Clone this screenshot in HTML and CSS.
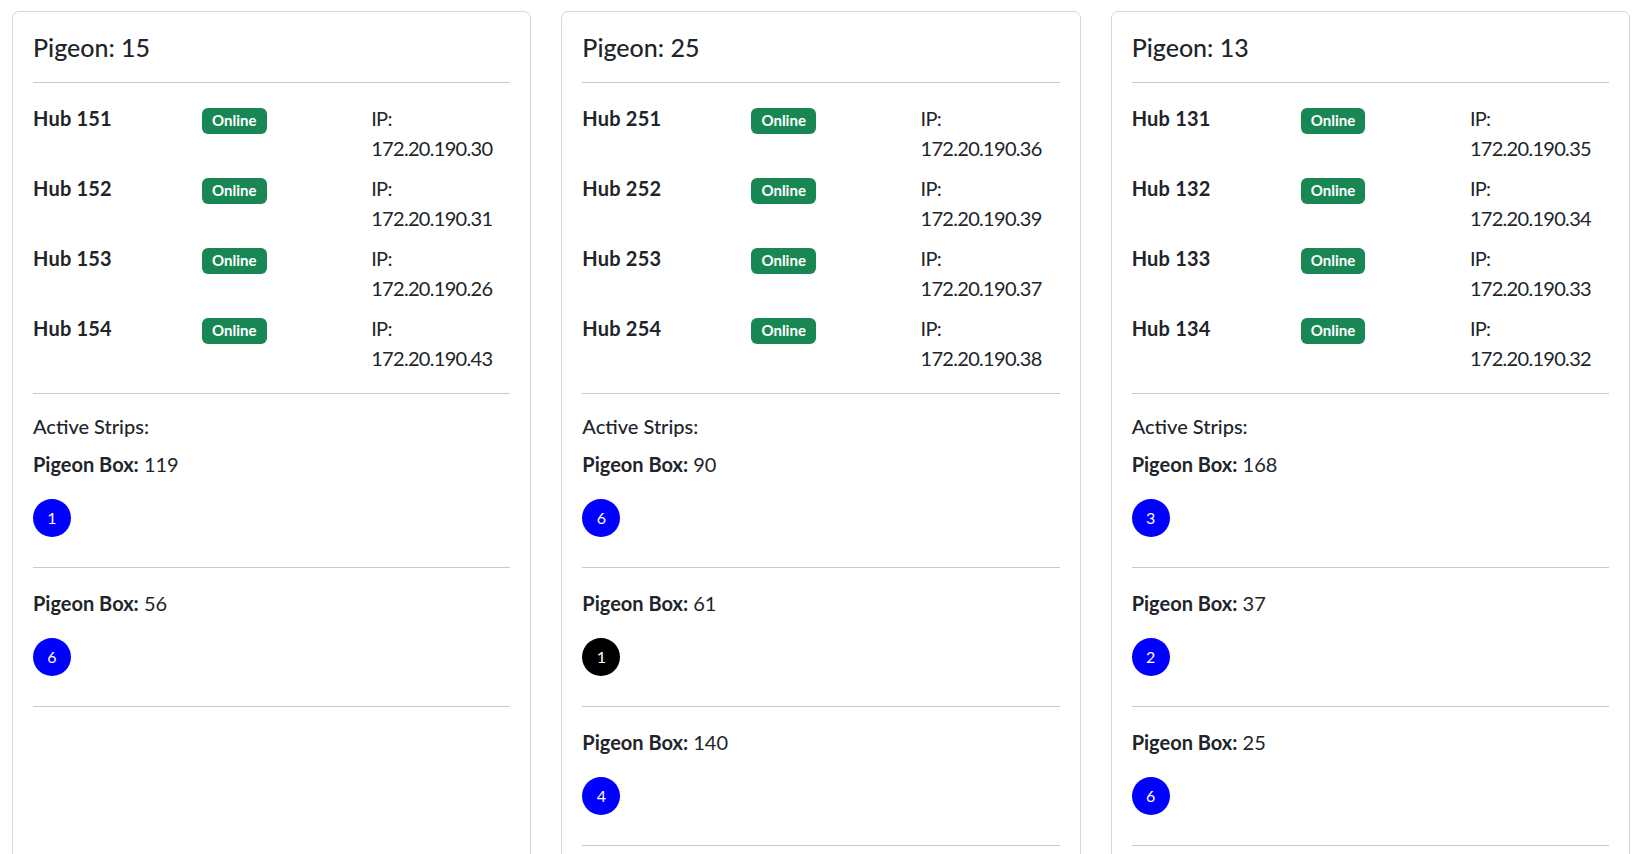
FILE: index.html
```html
<!DOCTYPE html>
<html lang="en">
<head>
<meta charset="utf-8">
<title>Pigeons</title>
<link rel="stylesheet" href="styles.css">
</head>
<body>
<div class="page">

  <div class="card">
    <div class="card-body">
      <h5 class="card-title">Pigeon: 15</h5>
      <hr>
      <div class="hub-row"><div class="hub-name">Hub 151</div><div><span class="badge">Online</span></div><div class="hub-ip">IP: 172.20.190.30</div></div>
      <div class="hub-row"><div class="hub-name">Hub 152</div><div><span class="badge">Online</span></div><div class="hub-ip">IP: 172.20.190.31</div></div>
      <div class="hub-row"><div class="hub-name">Hub 153</div><div><span class="badge">Online</span></div><div class="hub-ip">IP: 172.20.190.26</div></div>
      <div class="hub-row"><div class="hub-name">Hub 154</div><div><span class="badge">Online</span></div><div class="hub-ip">IP: 172.20.190.43</div></div>
      <hr>
      <h6 class="strips-title">Active Strips:</h6>
      <p class="box-label"><strong>Pigeon Box:</strong> 119</p>
      <div class="dots"><span class="dot dot-blue">1</span></div>
      <hr>
      <p class="box-label"><strong>Pigeon Box:</strong> 56</p>
      <div class="dots"><span class="dot dot-blue">6</span></div>
      <hr>
    </div>
  </div>

  <div class="card">
    <div class="card-body">
      <h5 class="card-title">Pigeon: 25</h5>
      <hr>
      <div class="hub-row"><div class="hub-name">Hub 251</div><div><span class="badge">Online</span></div><div class="hub-ip">IP: 172.20.190.36</div></div>
      <div class="hub-row"><div class="hub-name">Hub 252</div><div><span class="badge">Online</span></div><div class="hub-ip">IP: 172.20.190.39</div></div>
      <div class="hub-row"><div class="hub-name">Hub 253</div><div><span class="badge">Online</span></div><div class="hub-ip">IP: 172.20.190.37</div></div>
      <div class="hub-row"><div class="hub-name">Hub 254</div><div><span class="badge">Online</span></div><div class="hub-ip">IP: 172.20.190.38</div></div>
      <hr>
      <h6 class="strips-title">Active Strips:</h6>
      <p class="box-label"><strong>Pigeon Box:</strong> 90</p>
      <div class="dots"><span class="dot dot-blue">6</span></div>
      <hr>
      <p class="box-label"><strong>Pigeon Box:</strong> 61</p>
      <div class="dots"><span class="dot dot-black">1</span></div>
      <hr>
      <p class="box-label"><strong>Pigeon Box:</strong> 140</p>
      <div class="dots"><span class="dot dot-blue">4</span></div>
      <hr>
    </div>
  </div>

  <div class="card">
    <div class="card-body">
      <h5 class="card-title">Pigeon: 13</h5>
      <hr>
      <div class="hub-row"><div class="hub-name">Hub 131</div><div><span class="badge">Online</span></div><div class="hub-ip">IP: 172.20.190.35</div></div>
      <div class="hub-row"><div class="hub-name">Hub 132</div><div><span class="badge">Online</span></div><div class="hub-ip">IP: 172.20.190.34</div></div>
      <div class="hub-row"><div class="hub-name">Hub 133</div><div><span class="badge">Online</span></div><div class="hub-ip">IP: 172.20.190.33</div></div>
      <div class="hub-row"><div class="hub-name">Hub 134</div><div><span class="badge">Online</span></div><div class="hub-ip">IP: 172.20.190.32</div></div>
      <hr>
      <h6 class="strips-title">Active Strips:</h6>
      <p class="box-label"><strong>Pigeon Box:</strong> 168</p>
      <div class="dots"><span class="dot dot-blue">3</span></div>
      <hr>
      <p class="box-label"><strong>Pigeon Box:</strong> 37</p>
      <div class="dots"><span class="dot dot-blue">2</span></div>
      <hr>
      <p class="box-label"><strong>Pigeon Box:</strong> 25</p>
      <div class="dots"><span class="dot dot-blue">6</span></div>
      <hr>
    </div>
  </div>

</div>
</body>
</html>
```

FILE: styles.css
```css
html, body {
  margin: 0;
  padding: 0;
  overflow: hidden;
}

body {
  font-family: Lato, "Open Sans", sans-serif;
  font-size: 20px;
  line-height: 1.5;
  color: #212529;
  background: #ffffff;
}

.page {
  display: grid;
  grid-template-columns: repeat(3, 1fr);
  column-gap: 30px;
  padding: 11px 12px 0;
  align-items: stretch;
}

.card {
  border: 1px solid #d6d6d6;
  border-radius: 7px;
  min-height: 960px;
  background: #fff;
}

.card-body {
  padding: 20px;
}

.card-title {
  font-size: 25px;
  font-weight: 500;
  line-height: 1.2;
  margin: 0 0 10px;
}

hr {
  border: 0;
  border-top: 1px solid #c8c9ca;
  margin: 20px 0;
}

.hub-row {
  display: grid;
  grid-template-columns: repeat(3, 1fr);
  column-gap: 30px;
  margin-bottom: 10px;
}

.hub-name {
  font-weight: 700;
  letter-spacing: 0.01em;
}

.hub-ip {
  letter-spacing: -0.035em;
}

.badge {
  display: inline-block;
  background: #198754;
  color: #ffffff;
  font-size: 15px;
  font-weight: 700;
  line-height: 1;
  padding: 5px 10px 6px;
  border-radius: 6px;
  vertical-align: baseline;
}

.strips-title {
  font-size: 20px;
  font-weight: 500;
  line-height: 25px;
  margin: 0 0 10px;
}

.box-label {
  margin: 0 0 20px;
}

.box-label strong {
  font-weight: 700;
}

.dots {
  display: flex;
  gap: 8px;
  margin-bottom: 30px;
}

.dot {
  width: 38px;
  height: 38px;
  border-radius: 50%;
  display: flex;
  align-items: center;
  justify-content: center;
  color: #ffffff;
  font-size: 16px;
  line-height: 1;
}

.dot-blue {
  background: #0000ff;
}

.dot-black {
  background: #000000;
}
```
